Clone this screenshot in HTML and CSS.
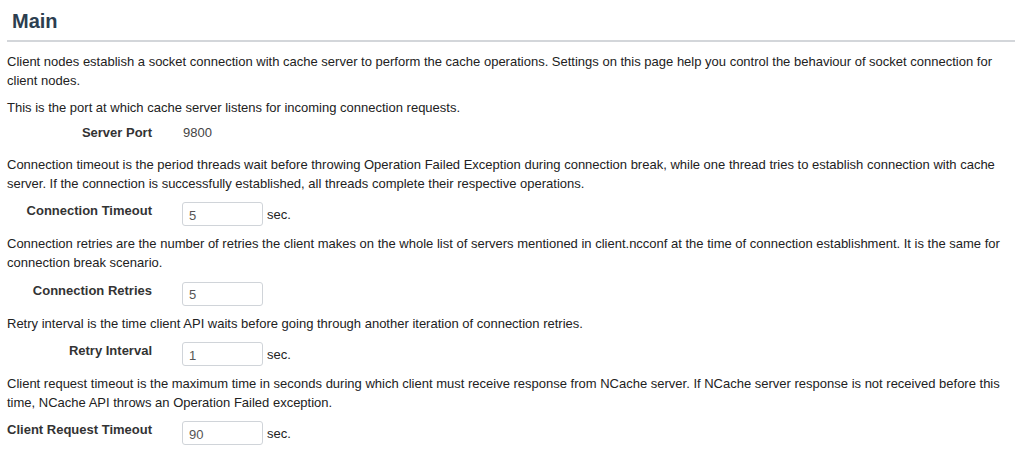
FILE: index.html
```html
<!DOCTYPE html>
<html lang="en">
<head>
    <meta charset="UTF-8">
    <title>Client Settings - Main</title>
    <link rel="stylesheet" href="styles.css">
</head>
<body>
    <div class="page">
        <h2 class="section-title">Main</h2>

        <p>Client nodes establish a socket connection with cache server to perform the cache operations. Settings on this page help you control the behaviour of socket connection for client nodes.</p>

        <p class="tight">This is the port at which cache server listens for incoming connection requests.</p>
        <div class="field-row static-row">
            <label class="field-label">Server Port</label>
            <span class="field-static">9800</span>
        </div>

        <p>Connection timeout is the period threads wait before throwing Operation Failed Exception during connection break, while one thread tries to establish connection with cache server. If the connection is successfully established, all threads complete their respective operations.</p>
        <div class="field-row">
            <label class="field-label" for="conn-timeout">Connection Timeout</label>
            <input class="field-input" type="text" id="conn-timeout" value="5">
            <span class="unit">sec.</span>
        </div>

        <p>Connection retries are the number of retries the client makes on the whole list of servers mentioned in client.ncconf at the time of connection establishment. It is the same for connection break scenario.</p>
        <div class="field-row">
            <label class="field-label" for="conn-retries">Connection Retries</label>
            <input class="field-input" type="text" id="conn-retries" value="5">
        </div>

        <p>Retry interval is the time client API waits before going through another iteration of connection retries.</p>
        <div class="field-row">
            <label class="field-label" for="retry-interval">Retry Interval</label>
            <input class="field-input" type="text" id="retry-interval" value="1">
            <span class="unit">sec.</span>
        </div>

        <p>Client request timeout is the maximum time in seconds during which client must receive response from NCache server. If NCache server response is not received before this time, NCache API throws an Operation Failed exception.</p>
        <div class="field-row">
            <label class="field-label" for="request-timeout">Client Request Timeout</label>
            <input class="field-input" type="text" id="request-timeout" value="90">
            <span class="unit">sec.</span>
        </div>
    </div>
</body>
</html>
```

FILE: styles.css
```css
body {
    font-family: "Liberation Sans", Arial, Helvetica, sans-serif;
    font-size: 13px;
    line-height: 1.42857;
    margin: 0;
    background: #fff;
    color: #222;
}
.page {
    padding: 0 0 0 7px;
}
.section-title {
    margin: 0 0 11px;
    padding: 10px 5px 8px;
    font-size: 20px;
    line-height: 22px;
    font-weight: bold;
    color: #2c3e50;
    border-bottom: 2px solid #d3d6da;
}
p {
    margin: 0 15px 9px 0;
}
p.tight {
    margin-bottom: 6px;
}
.field-row {
    display: flex;
    align-items: flex-start;
    margin: 0 0 9px;
}
.static-row {
    margin-bottom: 14px;
}
.field-label {
    width: 145px;
    text-align: right;
    font-weight: bold;
    color: #333;
}
.field-static {
    margin-left: 31px;
    color: #444;
}
.field-input {
    margin-left: 30px;
    width: 81px;
    height: 24px;
    box-sizing: border-box;
    padding: 2px 6px 0;
    border: 1px solid #d0d4d9;
    border-radius: 3px;
    font-family: inherit;
    font-size: 13px;
    color: #555;
}
.unit {
    margin-left: 4px;
    padding-top: 4px;
    color: #222;
}
```
